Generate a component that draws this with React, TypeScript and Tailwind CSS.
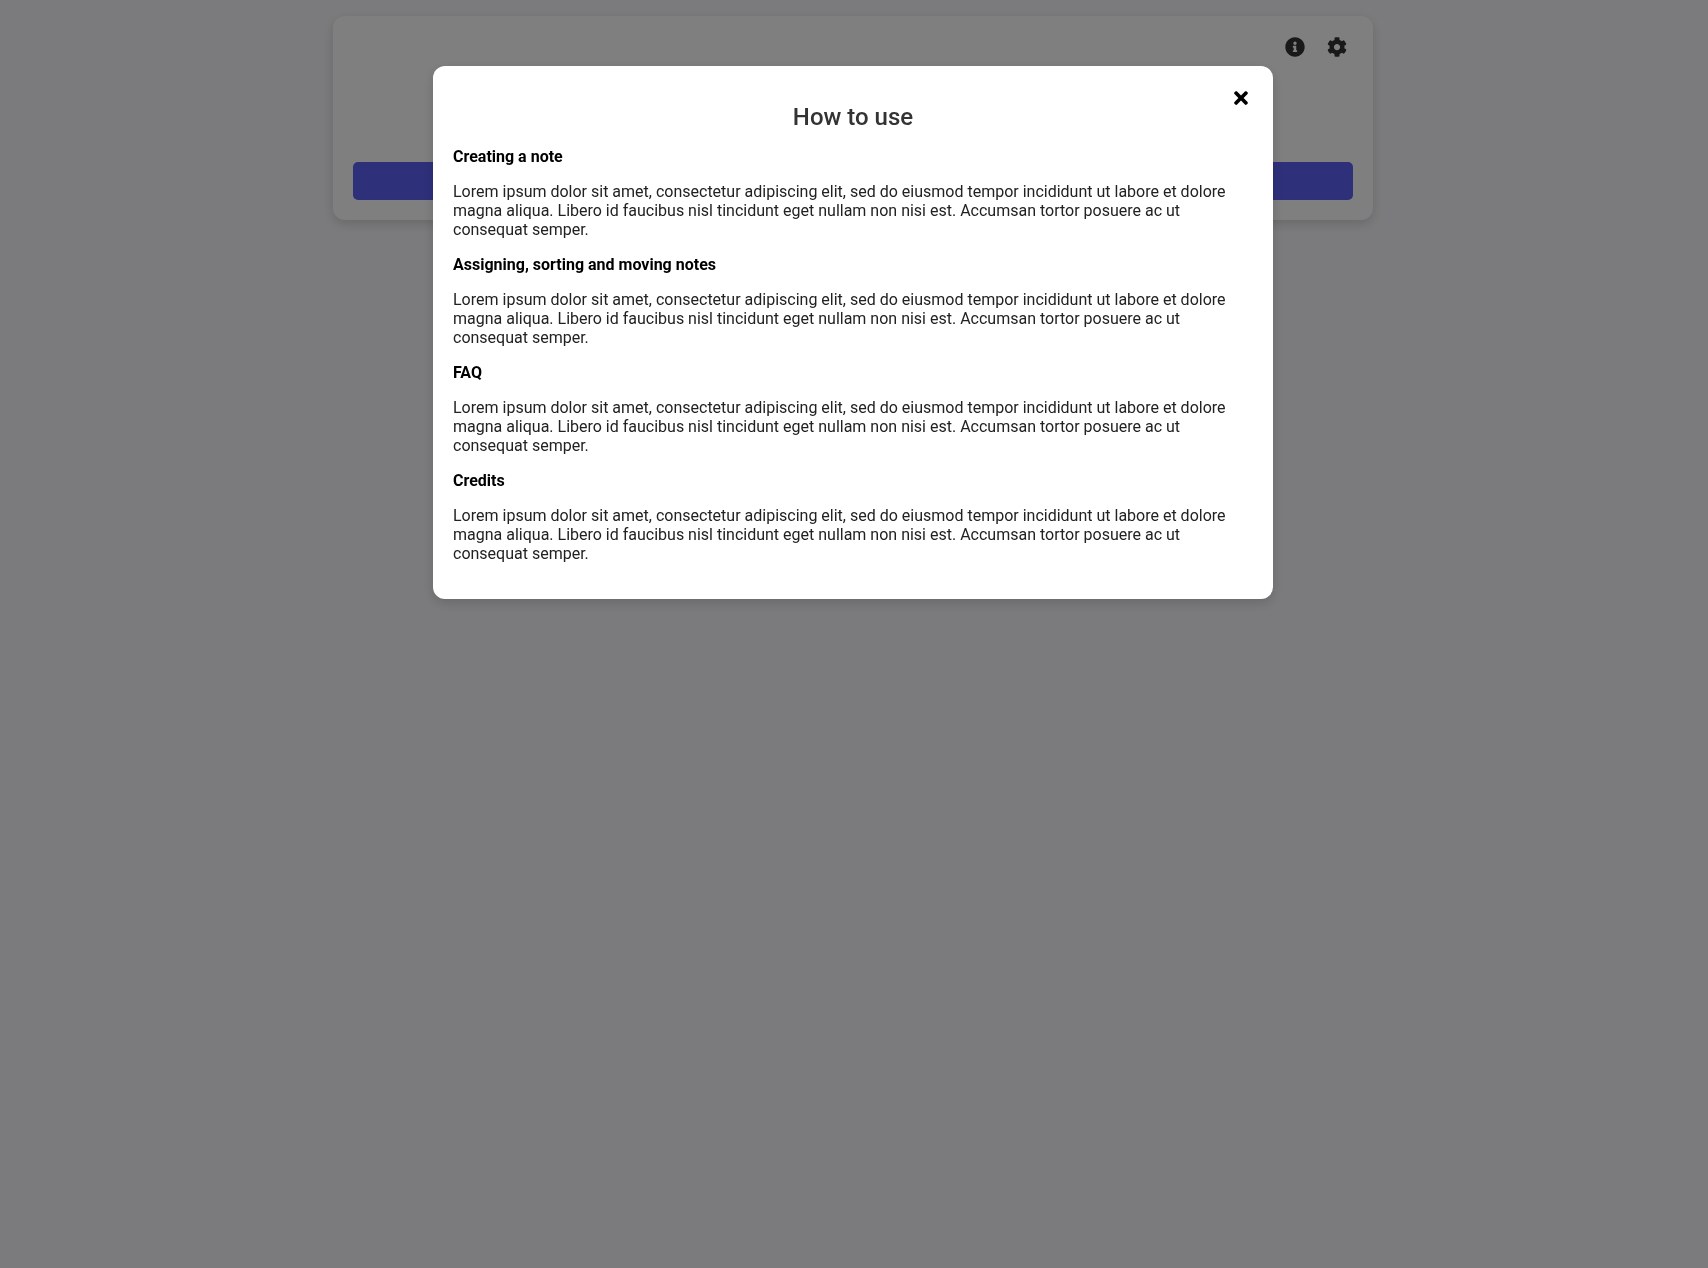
import { FaInfoCircle, FaCog, FaTimes } from "react-icons/fa";

const body =
  "Lorem ipsum dolor sit amet, consectetur adipiscing elit, sed do eiusmod tempor incididunt ut labore et dolore magna aliqua. Libero id faucibus nisl tincidunt eget nullam non nisi est. Accumsan tortor posuere ac ut consequat semper.";

const sections = ["Creating a note", "Assigning, sorting and moving notes", "FAQ", "Credits"];

export default function App() {
  return (
    <div className="min-h-screen bg-[#f7f7fa] py-4 pr-[18px] pl-4 font-[Roboto,sans-serif] text-base text-black">
      <main className="mx-auto flex max-w-[1040px] flex-col rounded-xl bg-white p-5 shadow-[0_4px_12px_rgba(0,0,0,0.15)]">
        <div className="flex justify-end gap-[22px] pr-[6px]">
          <button type="button" aria-label="How to use" className="py-px text-xl text-[#333]">
            <FaInfoCircle />
          </button>
          <button type="button" aria-label="Settings" className="py-px text-xl text-[#333]">
            <FaCog />
          </button>
        </div>
        <button type="button" aria-label="Add note" className="mt-[104px] h-[38px] w-full rounded-[5px] bg-[#5c62f5]" />
      </main>
      <div className="fixed inset-0 overflow-auto bg-black/50 pt-[66px] pr-[18px] pl-4">
        <section
          role="dialog"
          aria-modal="true"
          aria-labelledby="dialog-title"
          className="relative mx-auto max-w-[840px] rounded-xl bg-white px-5 pt-[37px] pb-9 shadow-[0_4px_12px_rgba(0,0,0,0.15)]"
        >
          <button type="button" aria-label="Close" className="absolute top-[22px] right-[22px] text-xl">
            <FaTimes />
          </button>
          <h1 id="dialog-title" className="text-center text-2xl leading-7 font-medium text-[#333]">
            How to use
          </h1>
          {sections.map((title) => (
            <div key={title} className="mt-4 leading-[19px]">
              <h2 className="font-bold">{title}</h2>
              <p className="mt-4 text-[#222]">{body}</p>
            </div>
          ))}
        </section>
      </div>
    </div>
  );
}
